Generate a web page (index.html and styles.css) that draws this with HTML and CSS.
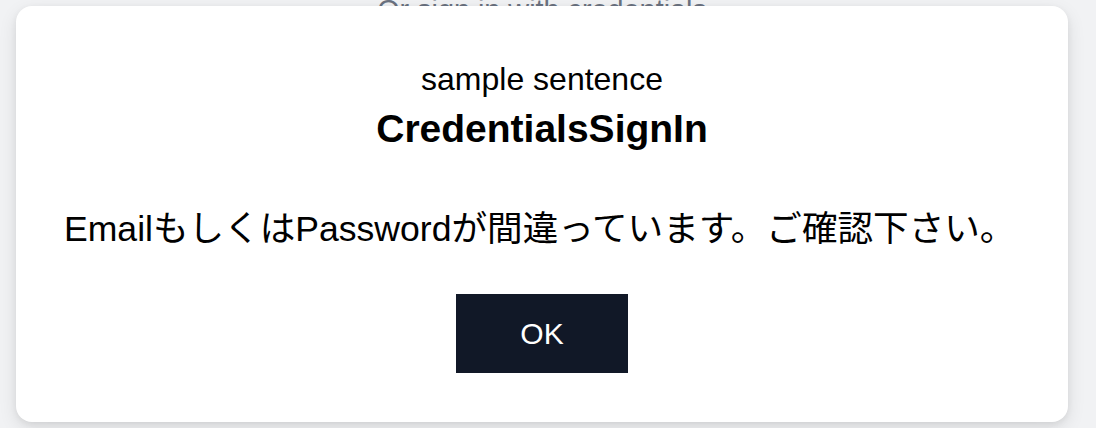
FILE: index.html
```html
<!DOCTYPE html>
<html lang="ja">
<head>
<meta charset="utf-8">
<title>CredentialsSignIn</title>
<link rel="stylesheet" href="styles.css">
</head>
<body>
<div class="page">
  <p class="divider-text">Or sign in with credentials</p>
</div>
<div class="overlay">
  <div class="dialog" role="dialog">
    <p class="subtitle">sample sentence</p>
    <h2 class="title">CredentialsSignIn</h2>
    <p class="message">EmailもしくはPasswordが間違っています。ご確認下さい。</p>
    <div class="actions">
      <button class="ok-btn" type="button">OK</button>
    </div>
  </div>
</div>
</body>
</html>
```

FILE: styles.css
```css
* { box-sizing: border-box; }
html, body { margin: 0; padding: 0; }
body {
  width: 1096px;
  height: 428px;
  overflow: hidden;
  background: #f1f2f4;
  font-family: "Liberation Sans", "Noto Sans CJK JP", sans-serif;
  color: #000;
  position: relative;
}
.page {
  display: flex;
  justify-content: center;
  padding: 0 12px 0 0;
}
.divider-text {
  margin: -6px 0 0;
  font-size: 28.8px;
  line-height: 32px;
  color: #6b7280;
}
.overlay {
  position: absolute;
  inset: 0;
  padding: 6px 28px 6px 16px;
}
.dialog {
  height: 416px;
  background: #fff;
  border-radius: 16px;
  box-shadow: 0 6px 18px rgba(0,0,0,0.10), 0 2px 6px rgba(0,0,0,0.06);
  padding: 53px 32px 0 48px;
  display: flex;
  flex-direction: column;
}
.subtitle {
  margin: 0 16px 0 0;
  text-align: center;
  font-size: 32px;
  line-height: 40px;
}
.title {
  margin: 6px 16px 0 0;
  text-align: center;
  font-size: 39px;
  line-height: 48px;
  font-weight: 700;
}
.message {
  margin: 52px 0 0;
  font-size: 35.6px;
  line-height: 48px;
  white-space: nowrap;
}
.actions {
  margin: 41px 16px 0 0;
  display: flex;
  justify-content: center;
}
.ok-btn {
  width: 172px;
  height: 79px;
  border: 0;
  border-radius: 0;
  background: #111827;
  color: #fff;
  font-family: "Liberation Sans", sans-serif;
  font-size: 30px;
}
```
